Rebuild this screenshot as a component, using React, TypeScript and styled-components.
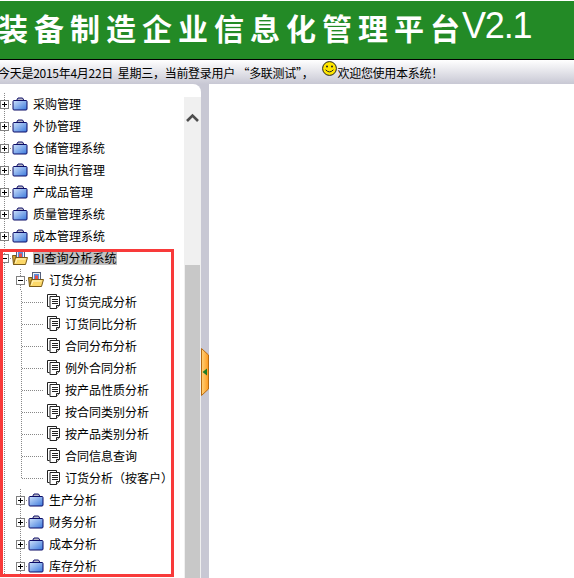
import styled, { createGlobalStyle } from "styled-components";

const CJK = `"Noto Sans CJK SC", "Liberation Sans", sans-serif`;
const ROW_HEIGHT = 22;

type TreeNode = {
  label: string;
  kind: "closed" | "open" | "doc";
  level: number;
  selected?: boolean;
  lastInBranch?: boolean;
};

const nodes: TreeNode[] = [
  { label: "采购管理", kind: "closed", level: 0 },
  { label: "外协管理", kind: "closed", level: 0 },
  { label: "仓储管理系统", kind: "closed", level: 0 },
  { label: "车间执行管理", kind: "closed", level: 0 },
  { label: "产成品管理", kind: "closed", level: 0 },
  { label: "质量管理系统", kind: "closed", level: 0 },
  { label: "成本管理系统", kind: "closed", level: 0 },
  { label: "BI查询分析系统", kind: "open", level: 0, selected: true },
  { label: "订货分析", kind: "open", level: 1 },
  { label: "订货完成分析", kind: "doc", level: 2 },
  { label: "订货同比分析", kind: "doc", level: 2 },
  { label: "合同分布分析", kind: "doc", level: 2 },
  { label: "例外合同分析", kind: "doc", level: 2 },
  { label: "按产品性质分析", kind: "doc", level: 2 },
  { label: "按合同类别分析", kind: "doc", level: 2 },
  { label: "按产品类别分析", kind: "doc", level: 2 },
  { label: "合同信息查询", kind: "doc", level: 2 },
  { label: "订货分析（按客户）", kind: "doc", level: 2, lastInBranch: true },
  { label: "生产分析", kind: "closed", level: 1 },
  { label: "财务分析", kind: "closed", level: 1 },
  { label: "成本分析", kind: "closed", level: 1 },
  { label: "库存分析", kind: "closed", level: 1 },
];

function Briefcase() {
  return (
    <svg width="16" height="14" viewBox="0 0 16 14">
      <defs>
        <linearGradient id="caseFill" x1="0" y1="0" x2="1" y2="1">
          <stop offset="0" stopColor="#cfe2fb" />
          <stop offset="1" stopColor="#3a78dc" />
        </linearGradient>
      </defs>
      <path d="M4.5 3.5 L6 1 H10.5 L12 3.5" fill="#b9b9c6" stroke="#10106a" />
      <rect x="1" y="3.5" width="14" height="9.5" rx="1" fill="url(#caseFill)" stroke="#0c0c66" />
    </svg>
  );
}

function OpenFolder() {
  return (
    <svg width="16" height="16" viewBox="0 0 16 16">
      <path d="M0.5 5.5 H4 V14.5 H1.5 Z" fill="#d8a838" stroke="#7a5a18" />
      <rect x="4.5" y="0.5" width="8" height="8" fill="#eef0f6" stroke="#55607a" />
      <rect x="6" y="2" width="5" height="5" fill="#5a8fe0" />
      <rect x="7" y="3.5" width="3" height="3.5" fill="#e8504a" />
      <path d="M1.5 14.5 L3.5 7.5 H15.5 L13.5 14.5 Z" fill="#fcd868" stroke="#7a5a18" />
      <path d="M3.5 13 L4.8 9 H13.5" fill="none" stroke="#fff4c0" />
    </svg>
  );
}

function DocStack() {
  return (
    <svg width="14" height="16" viewBox="0 0 14 16">
      <path d="M2.5 12.5 H0.5 V0.5 H9.5 V2" fill="#fff" stroke="#222" />
      <path d="M3 2.5 H12.5 V11.5 L9.5 14.5 H3 Z" fill="#fff" stroke="#222" />
      <path d="M5 5.5 H11 M5 7.5 H11 M5 9.5 H11" stroke="#222" />
      <path d="M9.5 14.5 V11.5 H12.5" fill="#ddd" stroke="#222" />
    </svg>
  );
}

function Smiley() {
  return (
    <svg width="15" height="15" viewBox="0 0 15 15">
      <circle cx="7.5" cy="7.5" r="6.9" fill="#ffe600" stroke="#222" />
      <circle cx="5" cy="5.6" r="1" fill="#222" />
      <circle cx="10" cy="5.6" r="1" fill="#222" />
      <path d="M3.6 8.8 Q7.5 13 11.4 8.8" fill="none" stroke="#222" />
    </svg>
  );
}

function ScrollUpArrow() {
  return (
    <svg width="13" height="9" viewBox="0 0 13 9">
      <path d="M1 8 L6.5 2.5 L12 8" fill="none" stroke="#4d4d4d" strokeWidth="2.6" />
    </svg>
  );
}

function HandleShape() {
  return (
    <svg width="8" height="48" viewBox="0 0 8 48">
      <defs>
        <linearGradient id="handleFill" x1="0" y1="0" x2="1" y2="0">
          <stop offset="0" stopColor="#ffd27a" />
          <stop offset="1" stopColor="#ff9a1e" />
        </linearGradient>
      </defs>
      <path d="M0.5 0.5 L7.5 7 V41 L0.5 47.5 Z" fill="url(#handleFill)" stroke="#b86a10" />
      <path d="M1.5 24 L6 20.5 V27.5 Z" fill="#1e7c28" />
    </svg>
  );
}

function TreeRow({ node }: { node: TreeNode }) {
  const { label, kind, level, selected, lastInBranch } = node;
  const guides = Array.from({ length: level }, (_, i) => i);

  return (
    <Row>
      {kind === "doc" ? guides.slice(0, 1).map((i) => <GuideCell key={i} />) : null}
      {kind !== "doc" ? guides.map((i) => <GuideCell key={i} />) : null}
      {kind === "doc" ? (
        <ConnectorCell $last={lastInBranch} />
      ) : (
        <ToggleCell>
          <Toggle $open={kind === "open"} />
        </ToggleCell>
      )}
      {kind === "doc" ? (
        <IconSlot $doc>
          <DocStack />
        </IconSlot>
      ) : (
        <IconSlot>{kind === "open" ? <OpenFolder /> : <Briefcase />}</IconSlot>
      )}
      <Label $selected={selected}>{label}</Label>
    </Row>
  );
}

export default function App() {
  return (
    <>
      <GlobalStyle />
      <Page>
        <Banner>
          <BannerTitle>装备制造企业信息化管理平台</BannerTitle>
          <BannerVersion>V2.1</BannerVersion>
        </Banner>
        <StatusBar>
          <StatusText>今天是2015年4月22日&nbsp;&nbsp;星期三，当前登录用户 “多联测试”，</StatusText>
          <SmileySlot>
            <Smiley />
          </SmileySlot>
          <StatusText>欢迎您使用本系统！</StatusText>
        </StatusBar>
        <Workspace>
          <Sidebar>
            <Tree>
              {nodes.map((node) => (
                <TreeRow key={node.label} node={node} />
              ))}
            </Tree>
            <Scrollbar>
              <ScrollTrack>
                <ScrollUpArrow />
              </ScrollTrack>
              <ScrollThumb />
            </Scrollbar>
            <Highlight />
          </Sidebar>
          <Splitter>
            <HandleShape />
          </Splitter>
          <Content />
        </Workspace>
      </Page>
    </>
  );
}

const GlobalStyle = createGlobalStyle`
  html, body {
    margin: 0;
    padding: 0;
    background: #fff;
    overflow: hidden;
  }
`;

const Page = styled.div`
  width: 574px;
  height: 578px;
  display: flex;
  flex-direction: column;
  overflow: hidden;
  font-family: ${CJK};
  color: #000;
`;

const Banner = styled.div`
  margin-top: 1px;
  height: 58px;
  flex: none;
  display: flex;
  align-items: center;
  background: #238a26;
  border-bottom: 1px solid #000;
  color: #fff;
  white-space: nowrap;
  overflow: hidden;
`;

const BannerTitle = styled.div`
  width: 464px;
  flex: none;
  margin-left: -2px;
  margin-top: -6px;
  font-size: 30px;
  font-weight: 700;
  letter-spacing: 6px;
  line-height: 40px;
`;

const BannerVersion = styled.div`
  flex: none;
  font-family: "Liberation Sans", sans-serif;
  font-size: 36px;
  line-height: 40px;
  letter-spacing: -1.2px;
  margin-top: -8px;
`;

const StatusBar = styled.div`
  height: 24px;
  flex: none;
  display: flex;
  align-items: center;
  background: linear-gradient(#ffffff, #c8c8d4);
  white-space: nowrap;
  overflow: hidden;
`;

const StatusText = styled.span`
  flex: none;
  font-size: 12px;
  line-height: 24px;
  letter-spacing: -0.28px;
  padding-top: 1px;
  &:first-child {
    margin-left: -2px;
  }
`;

const SmileySlot = styled.span`
  display: flex;
  flex: none;
  margin: 0 0 7px 9px;
`;

const Workspace = styled.div`
  flex: 1;
  min-height: 0;
  display: flex;
  background: #c8c8d4;
`;

const Sidebar = styled.div`
  width: 201px;
  flex: none;
  position: relative;
  display: flex;
  background: #fff;
  border-top-right-radius: 8px;
  overflow: hidden;
  padding-top: 9px;
  box-sizing: border-box;
`;

const Tree = styled.div`
  width: 184px;
  flex: none;
  margin-left: -4px;
  padding-right: 4px;
  overflow: hidden;
`;

const Row = styled.div`
  height: ${ROW_HEIGHT}px;
  display: flex;
  align-items: center;
  white-space: nowrap;
`;

const GuideCell = styled.div`
  width: 16px;
  height: 100%;
  flex: none;
  background: repeating-linear-gradient(#888 0 1px, transparent 1px 2px) 8px 0 / 1px 100% no-repeat;
`;

const ConnectorCell = styled.div<{ $last?: boolean }>`
  width: 32px;
  height: 100%;
  flex: none;
  background:
    repeating-linear-gradient(#888 0 1px, transparent 1px 2px) 9px 0 / 1px ${(props) => (props.$last ? "50%" : "100%")} no-repeat,
    repeating-linear-gradient(90deg, #888 0 1px, transparent 1px 2px) 10px 50% / 21px 1px no-repeat;
`;

const ToggleCell = styled.div`
  width: 16px;
  height: 100%;
  flex: none;
  display: flex;
  align-items: center;
  justify-content: center;
  background:
    repeating-linear-gradient(#888 0 1px, transparent 1px 2px) 8px 0 / 1px 100% no-repeat,
    repeating-linear-gradient(90deg, #888 0 1px, transparent 1px 2px) 12px 50% / 4px 1px no-repeat;
`;

const Toggle = styled.span<{ $open?: boolean }>`
  width: 9px;
  height: 9px;
  box-sizing: border-box;
  border: 1px solid #808080;
  background:
    linear-gradient(#000, #000) 1px 3px / 5px 1px no-repeat,
    ${(props) => (props.$open ? "none" : "linear-gradient(#000, #000) 3px 1px / 1px 5px no-repeat")},
    #fff;
  background-color: #fff;
`;

const IconSlot = styled.span<{ $doc?: boolean }>`
  display: flex;
  flex: none;
  width: ${(props) => (props.$doc ? "14px" : "16px")};
  margin-left: ${(props) => (props.$doc ? "3px" : "0")};
  margin-right: ${(props) => (props.$doc ? "4px" : "5px")};
`;

const Label = styled.span<{ $selected?: boolean }>`
  font-size: 12px;
  line-height: 14px;
  padding: 0 1px 0 0;
  background: ${(props) => (props.$selected ? "#c0c0c0" : "transparent")};
`;

const Scrollbar = styled.div`
  width: 17px;
  flex: none;
  margin-top: 4px;
  display: flex;
  flex-direction: column;
  background: #f0f0f0;
`;

const ScrollTrack = styled.div`
  height: 168px;
  flex: none;
  display: flex;
  justify-content: center;
  padding-top: 16px;
  box-sizing: border-box;
`;

const ScrollThumb = styled.div`
  flex: 1;
  margin: 0 1px;
  background: #c8c8c8;
`;

const Highlight = styled.div`
  position: absolute;
  left: 0;
  top: 165px;
  width: 174px;
  height: 328px;
  box-sizing: border-box;
  border: 3px solid #f83a3a;
  pointer-events: none;
`;

const Splitter = styled.div`
  width: 8px;
  flex: none;
  padding-top: 264px;
  box-sizing: border-box;
  background: #c8c8d4;
`;

const Content = styled.div`
  flex: 1;
  background: #fff;
`;
